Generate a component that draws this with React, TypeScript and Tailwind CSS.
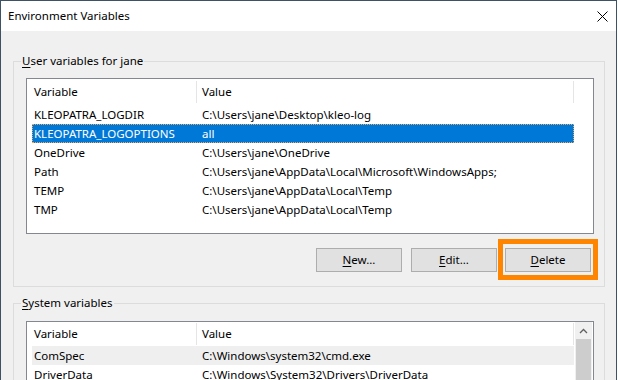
import React from "react";

type Row = { name: string; value: string };

const userVars: Row[] = [
  { name: "KLEOPATRA_LOGDIR", value: "C:\\Users\\jane\\Desktop\\kleo-log" },
  { name: "KLEOPATRA_LOGOPTIONS", value: "all" },
  { name: "OneDrive", value: "C:\\Users\\jane\\OneDrive" },
  { name: "Path", value: "C:\\Users\\jane\\AppData\\Local\\Microsoft\\WindowsApps;" },
  { name: "TEMP", value: "C:\\Users\\jane\\AppData\\Local\\Temp" },
  { name: "TMP", value: "C:\\Users\\jane\\AppData\\Local\\Temp" },
];

const systemVars: Row[] = [
  { name: "ComSpec", value: "C:\\Windows\\system32\\cmd.exe" },
  { name: "DriverData", value: "C:\\Windows\\System32\\Drivers\\DriverData" },
];

function Header({ tall }: { tall: boolean }) {
  return (
    <div className={`flex w-[542px] ${tall ? "h-[26px]" : "h-[24px]"} items-center`}>
      <div className="w-[164px] pl-[2px]">Variable</div>
      <div className="w-px h-[22px] bg-[#e5e5e5]" />
      <div className="w-[376px] pl-[5px]">Value</div>
      <div className="w-px h-[22px] bg-[#e5e5e5]" />
    </div>
  );
}

function ListRow({ row, selected, hover }: { row: Row; selected?: boolean; hover?: boolean }) {
  let cls = "";
  if (selected) cls = "bg-[#0078d7] text-white outline outline-1 outline-dotted outline-[#f2a65a] -outline-offset-1";
  else if (hover) cls = "bg-[#efefef]";
  return (
    <div className={`flex w-[542px] h-[19px] items-center ${cls}`}>
      <div className="w-[165px] pl-[2px] whitespace-nowrap">{row.name}</div>
      <div className="pl-[5px] whitespace-nowrap">{row.value}</div>
    </div>
  );
}

function Button({ first, rest }: { first: string; rest: string }) {
  return (
    <div className="w-[86px] h-[24px] flex items-center justify-center bg-[#e1e1e1] border border-[#adadad]">
      <span>
        <u className="underline-offset-2">{first}</u>
        {rest}
      </span>
    </div>
  );
}

function GroupLabel({ first, rest }: { first: string; rest: string }) {
  return (
    <span className="absolute left-[7px] top-[-9px] px-[1px] bg-[#f0f0f0] leading-[16px]">
      <u className="underline-offset-2">{first}</u>
      {rest}
    </span>
  );
}

export default function App() {
  return (
    <div
      className="w-[618px] h-[380px] overflow-hidden bg-white text-[11.5px] text-black"
      style={{ fontFamily: '"Noto Sans", "Open Sans", sans-serif' }}
    >
      <div className="w-[617px] h-[380px] border-l border-t border-r border-[#3e5266] bg-[#f0f0f0] flex flex-col">
        {/* title bar */}
        <div className="shrink-0 h-[30px] bg-white flex items-center justify-between pl-[7px] pr-[8px]">
          <span>Environment Variables</span>
          <svg width="11" height="11" viewBox="0 0 11 11">
            <path d="M0.5 0.5 L10.5 10.5 M10.5 0.5 L0.5 10.5" stroke="#000" strokeWidth="1" />
          </svg>
        </div>

        {/* user variables */}
        <div className="shrink-0 relative mt-[30px] ml-[12px] w-[592px] h-[226px] border border-[#dcdcdc]">
          <GroupLabel first="U" rest="ser variables for jane" />
          <div className="pt-[16px] pl-[12px]">
            <div className="w-[568px] h-[156px] border border-[#828790] bg-white pl-[5px]">
              <Header tall />
              {userVars.map((r, i) => (
                <ListRow key={r.name} row={r} selected={i === 1} />
              ))}
            </div>
          </div>
          <div className="flex mt-[14px] pl-[302px]">
            <Button first="N" rest="ew..." />
            <div className="ml-[9px]">
              <Button first="E" rest="dit..." />
            </div>
            <div className="relative ml-[8px]">
              <Button first="D" rest="elete" />
              <div className="absolute left-[-7px] right-[-7px] top-[-9px] bottom-[-8px] border-[5px] border-[#ff8400]" />
            </div>
          </div>
        </div>

        {/* system variables */}
        <div className="shrink-0 relative mt-[16px] ml-[12px] w-[592px] h-[120px] border border-[#dcdcdc] border-b-0">
          <GroupLabel first="S" rest="ystem variables" />
          <div className="pt-[17px] pl-[12px]">
            <div className="w-[568px] h-[100px] border border-[#828790] bg-white pl-[5px] flex">
              <div className="w-[543px]">
                <Header tall={false} />
                {systemVars.map((r, i) => (
                  <ListRow key={r.name} row={r} hover={i === 0} />
                ))}
              </div>
              <div className="w-[17px] bg-[#f0f0f0] flex flex-col">
                <div className="h-[17px] flex items-center justify-center">
                  <svg width="9" height="6" viewBox="0 0 9 6">
                    <path d="M1 5 L4.5 1.5 L8 5" fill="none" stroke="#606060" strokeWidth="1.3" />
                  </svg>
                </div>
                <div className="mx-[1px] flex-1 bg-[#cdcdcd]" />
              </div>
            </div>
          </div>
        </div>
      </div>
    </div>
  );
}
